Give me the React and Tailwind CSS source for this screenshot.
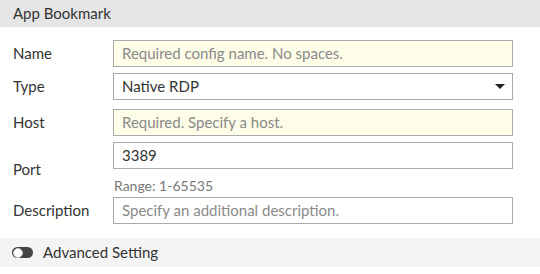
import React from 'react';

const font = { fontFamily: 'Lato, "Open Sans", sans-serif' };

const Row = ({ label, children, className = '', center }) => (
  <div className={`flex ${center ? 'items-center' : 'items-start'} ${className}`}>
    <div className="w-[113px] shrink-0 pl-[13px] h-[27px] flex items-center text-[15px] text-[#333]">{label}</div>
    <div className="w-[400px]">{children}</div>
  </div>
);

const Field = ({ placeholder, value, required }) => (
  <div
    className={`h-[27px] border border-[#aaaaaa] flex items-center px-[8px] text-[15px] ${
      required ? 'bg-[#fdfde8]' : 'bg-white'
    } ${value ? 'text-[#333]' : 'text-[#8a8a8a]'}`}
  >
    {value || placeholder}
  </div>
);

const App = () => {
  return (
    <div className="w-[540px] h-[274px] bg-white overflow-hidden" style={font}>
      <div className="h-[27px] bg-[#e5e5e5] flex items-center pl-[13px] text-[15px] text-[#333]">App Bookmark</div>

      <Row label="Name" className="mt-[13px]">
        <Field placeholder="Required config name. No spaces." required />
      </Row>

      <Row label="Type" className="mt-[6px]">
        <div className="h-[27px] border border-[#aaaaaa] bg-white flex items-center justify-between px-[8px] text-[15px] text-[#333]">
          <span>Native RDP</span>
          <svg width="10" height="5" viewBox="0 0 10 5" className="mr-[-1px]">
            <path d="M0 0 H10 L5 5 Z" fill="#222" />
          </svg>
        </div>
      </Row>

      <Row label="Host" className="mt-[9px]">
        <Field placeholder="Required. Specify a host." required />
      </Row>

      <Row label="Port" className="mt-[6px]" center>
        <Field value="3389" />
        <div className="text-[14px] text-[#777] mt-[6px] h-[21px] pl-[1px] leading-[21px]">Range: 1-65535</div>
      </Row>

      <Row label="Description" className="mt-[1px]">
        <Field placeholder="Specify an additional description." />
      </Row>

      <div className="mt-[14px] h-[29px] bg-[#f4f4f4] flex items-center pl-[12px] gap-[10px] text-[15px] text-[#333]">
        <div className="w-[21px] h-[11px] rounded-full bg-[#444] flex items-center pl-[1px]">
          <div className="w-[10px] h-[10px] rounded-full bg-white border border-[#ccc]" />
        </div>
        <span>Advanced Setting</span>
      </div>
    </div>
  );
};

export default App;
